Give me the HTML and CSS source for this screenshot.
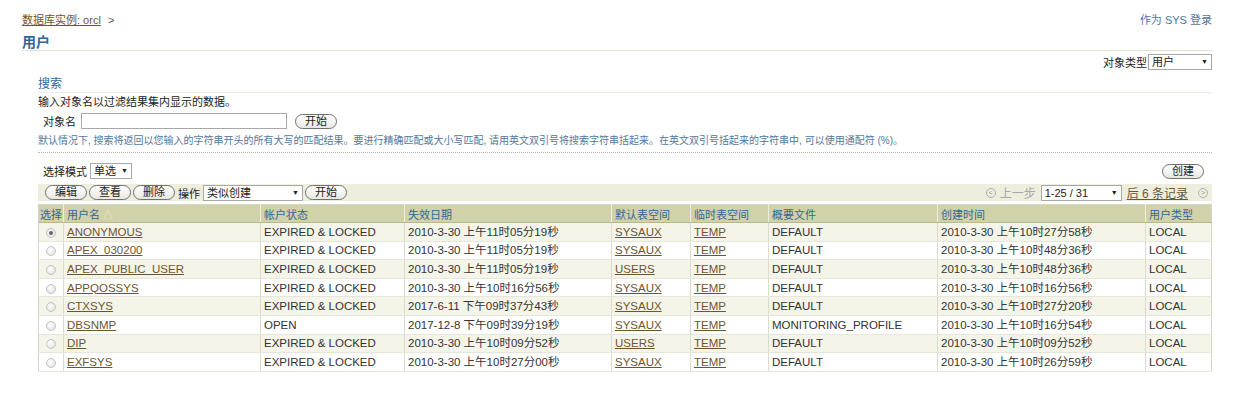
FILE: index.html
```html
<!DOCTYPE html>
<html lang="zh-CN">
<head>
    <meta charset="UTF-8">
    <title>用户</title>
    <link rel="stylesheet" href="styles.css">
</head>
<body>
    <div class="top-bar">
        <div class="crumbs"><a href="#">数据库实例: orcl</a> <span class="sep">&gt;</span></div>
        <a href="#" class="login-link">作为 SYS 登录</a>
    </div>
    <h1 class="page-title">用户</h1>
    <div class="type-row">
        <span>对象类型</span>
        <span class="fake-select type-select">用户<span class="arrow">▼</span></span>
    </div>

    <div class="content">
        <h2 class="section-title">搜索</h2>
        <div class="instr">输入对象名以过滤结果集内显示的数据。</div>
        <div class="search-row">
            <span class="field-label">对象名</span>
            <span class="text-input"></span>
            <span class="btn">开始</span>
        </div>
        <div class="help">默认情况下, 搜索将返回以您输入的字符串开头的所有大写的匹配结果。要进行精确匹配或大小写匹配, 请用英文双引号将搜索字符串括起来。在英文双引号括起来的字符串中, 可以使用通配符 (%)。</div>

        <div class="mode-row">
            <div class="mode-left">
                <span>选择模式</span>
                <span class="fake-select mode-select">单选<span class="arrow">▼</span></span>
            </div>
            <span class="btn">创建</span>
        </div>

        <div class="toolbar">
            <div class="tool-left">
                <span class="btn">编辑</span>
                <span class="btn">查看</span>
                <span class="btn">删除</span>
                <span class="tool-label">操作</span>
                <span class="fake-select action-select">类似创建<span class="arrow">▼</span></span>
                <span class="btn">开始</span>
            </div>
            <div class="pager">
                <span class="pager-icon">&lt;</span>
                <span class="pager-prev">上一步</span>
                <span class="fake-select page-select">1-25 / 31<span class="arrow">▼</span></span>
                <a href="#">后 6 条记录</a>
                <span class="pager-icon">&gt;</span>
            </div>
        </div>

        <table class="users">
            <colgroup>
                <col style="width:25px"><col style="width:197px"><col style="width:144px">
                <col style="width:207px"><col style="width:79px"><col style="width:78px">
                <col style="width:169px"><col style="width:208px"><col style="width:66px">
            </colgroup>
            <thead>
                <tr>
                    <th>选择</th><th>用户名 <span class="sort">△</span></th><th>帐户状态</th><th>失效日期</th>
                    <th>默认表空间</th><th>临时表空间</th><th>概要文件</th><th>创建时间</th><th>用户类型</th>
                </tr>
            </thead>
            <tbody>
                <tr>
                    <td class="sel"><span class="radio checked"></span></td><td><a href="#">ANONYMOUS</a></td><td>EXPIRED &amp; LOCKED</td>
                    <td>2010-3-30 上午11时05分19秒</td><td><a href="#">SYSAUX</a></td><td><a href="#">TEMP</a></td>
                    <td>DEFAULT</td><td>2010-3-30 上午10时27分58秒</td><td>LOCAL</td>
                </tr>
                <tr>
                    <td class="sel"><span class="radio"></span></td><td><a href="#">APEX_030200</a></td><td>EXPIRED &amp; LOCKED</td>
                    <td>2010-3-30 上午11时05分19秒</td><td><a href="#">SYSAUX</a></td><td><a href="#">TEMP</a></td>
                    <td>DEFAULT</td><td>2010-3-30 上午10时48分36秒</td><td>LOCAL</td>
                </tr>
                <tr>
                    <td class="sel"><span class="radio"></span></td><td><a href="#">APEX_PUBLIC_USER</a></td><td>EXPIRED &amp; LOCKED</td>
                    <td>2010-3-30 上午11时05分19秒</td><td><a href="#">USERS</a></td><td><a href="#">TEMP</a></td>
                    <td>DEFAULT</td><td>2010-3-30 上午10时48分36秒</td><td>LOCAL</td>
                </tr>
                <tr>
                    <td class="sel"><span class="radio"></span></td><td><a href="#">APPQOSSYS</a></td><td>EXPIRED &amp; LOCKED</td>
                    <td>2010-3-30 上午10时16分56秒</td><td><a href="#">SYSAUX</a></td><td><a href="#">TEMP</a></td>
                    <td>DEFAULT</td><td>2010-3-30 上午10时16分56秒</td><td>LOCAL</td>
                </tr>
                <tr>
                    <td class="sel"><span class="radio"></span></td><td><a href="#">CTXSYS</a></td><td>EXPIRED &amp; LOCKED</td>
                    <td>2017-6-11 下午09时37分43秒</td><td><a href="#">SYSAUX</a></td><td><a href="#">TEMP</a></td>
                    <td>DEFAULT</td><td>2010-3-30 上午10时27分20秒</td><td>LOCAL</td>
                </tr>
                <tr>
                    <td class="sel"><span class="radio"></span></td><td><a href="#">DBSNMP</a></td><td>OPEN</td>
                    <td>2017-12-8 下午09时39分19秒</td><td><a href="#">SYSAUX</a></td><td><a href="#">TEMP</a></td>
                    <td>MONITORING_PROFILE</td><td>2010-3-30 上午10时16分54秒</td><td>LOCAL</td>
                </tr>
                <tr>
                    <td class="sel"><span class="radio"></span></td><td><a href="#">DIP</a></td><td>EXPIRED &amp; LOCKED</td>
                    <td>2010-3-30 上午10时09分52秒</td><td><a href="#">USERS</a></td><td><a href="#">TEMP</a></td>
                    <td>DEFAULT</td><td>2010-3-30 上午10时09分52秒</td><td>LOCAL</td>
                </tr>
                <tr>
                    <td class="sel"><span class="radio"></span></td><td><a href="#">EXFSYS</a></td><td>EXPIRED &amp; LOCKED</td>
                    <td>2010-3-30 上午10时27分00秒</td><td><a href="#">SYSAUX</a></td><td><a href="#">TEMP</a></td>
                    <td>DEFAULT</td><td>2010-3-30 上午10时26分59秒</td><td>LOCAL</td>
                </tr>
            </tbody>
        </table>
    </div>
</body>
</html>
```

FILE: styles.css
```css
* {
    margin: 0;
    padding: 0;
    box-sizing: border-box;
}

body {
    background: #ffffff;
    color: #222222;
    font-family: "Liberation Sans", "Noto Sans CJK SC", sans-serif;
    font-size: 11px;
    padding: 13px 24px 0 22px;
}

a {
    color: #6e5530;
}

.top-bar {
    display: flex;
    justify-content: space-between;
    line-height: 14px;
}

.crumbs a {
    color: #6e5530;
}

.crumbs .sep {
    color: #555;
    margin-left: 4px;
}

.login-link {
    color: #4f77a0;
    text-decoration: none;
}

.page-title {
    margin-top: 7px;
    font-size: 14px;
    line-height: 16px;
    color: #336699;
    font-weight: bold;
    border-bottom: 1px solid #e4e2d4;
}

.type-row {
    display: flex;
    justify-content: flex-end;
    align-items: center;
    gap: 1px;
    margin-top: 3px;
    height: 16px;
}

.fake-select {
    display: inline-flex;
    align-items: center;
    justify-content: space-between;
    height: 16px;
    border: 1px solid #a8a8a8;
    background: #fff;
    padding: 0 3px 0 3px;
    font-size: 11px;
    line-height: 14px;
}

.fake-select .arrow {
    font-size: 7px;
    color: #222;
}

.type-select { width: 64px; }
.mode-select { width: 42px; }
.action-select { width: 100px; }
.page-select { width: 81px; }

.content {
    padding-left: 16px;
}

.section-title {
    margin-top: 6px;
    font-size: 12px;
    line-height: 16px;
    font-weight: normal;
    color: #336699;
    border-bottom: 1px solid #ecebe0;
}

.instr {
    margin-top: 2px;
    line-height: 14px;
}

.search-row {
    display: flex;
    align-items: center;
    margin-top: 4px;
    height: 16px;
    padding-left: 5px;
}

.field-label {
    margin-right: 5px;
}

.text-input {
    width: 206px;
    height: 16px;
    border: 1px solid #a8a8a8;
    background: #fff;
    margin-right: 8px;
}

.btn {
    display: inline-flex;
    align-items: center;
    justify-content: center;
    height: 15px;
    padding: 0 9px;
    border: 1px solid #707070;
    border-radius: 8px;
    background: linear-gradient(#ffffff, #e8e8e2);
    color: #222;
    font-size: 11px;
    line-height: 13px;
}

.help {
    margin-top: 6px;
    font-size: 10px;
    line-height: 12px;
    color: #52779c;
    padding-bottom: 5px;
    border-bottom: 1px dotted #b8b8b8;
}

.mode-row {
    display: flex;
    justify-content: space-between;
    align-items: center;
    margin-top: 10px;
    height: 16px;
    padding-left: 5px;
}

.mode-left {
    display: flex;
    align-items: center;
    gap: 3px;
}

.mode-row > .btn {
    margin-right: 8px;
}

.toolbar {
    display: flex;
    justify-content: space-between;
    align-items: center;
    margin-top: 5px;
    height: 17px;
    background: #eeeedf;
    padding: 0 4px 0 7px;
}

.tool-left {
    display: flex;
    align-items: center;
    gap: 2px;
}

.tool-label {
    margin: 0 1px;
}

.pager {
    display: flex;
    align-items: center;
    gap: 4px;
}

.pager-prev {
    color: #a8a8a8;
    font-size: 12px;
    margin-right: 1px;
}

.pager a {
    font-size: 12px;
    margin-left: 1px;
    margin-right: 6px;
}

.pager-icon {
    display: inline-flex;
    align-items: center;
    justify-content: center;
    width: 10px;
    height: 10px;
    border: 1px solid #b0b0b0;
    border-radius: 50%;
    color: #9a9a9a;
    font-size: 7px;
    line-height: 8px;
}

.users {
    margin-top: 3px;
    width: 1173px;
    table-layout: fixed;
    border-collapse: collapse;
    border: 1px solid #d6d6c8;
}

.users th {
    height: 18px;
    background: #d1d1aa;
    color: #336699;
    font-weight: normal;
    font-size: 11px;
    text-align: left;
    padding: 0 3px;
    border-left: 1px solid #eeeee0;
    border-bottom: 1px solid #b8b890;
    white-space: nowrap;
}

.users th:first-child {
    border-left: none;
    padding: 0 1px;
}

.sort {
    color: #ececd0;
    font-size: 10px;
}

.users td {
    height: 18.6px;
    padding: 0 3px;
    font-size: 11.5px;
    line-height: 14px;
    color: #333333;
    border-left: 1px solid #dcdccc;
    border-bottom: 1px solid #e6e6da;
    white-space: nowrap;
    overflow: hidden;
}

.users td a {
    color: #6e5530;
}

.users td:first-child {
    border-left: none;
}

.users tbody tr:nth-child(odd) td {
    background: #f4f4e8;
}

.users td.sel {
    text-align: center;
}

.radio {
    display: inline-block;
    width: 10px;
    height: 10px;
    border-radius: 50%;
    border: 1px solid #c4c4c4;
    background: radial-gradient(circle at 40% 40%, #ffffff, #dadada);
    vertical-align: middle;
    position: relative;
}

.radio.checked::after {
    content: "";
    position: absolute;
    left: 2px;
    top: 2px;
    width: 4px;
    height: 4px;
    border-radius: 50%;
    background: #666;
}
```
